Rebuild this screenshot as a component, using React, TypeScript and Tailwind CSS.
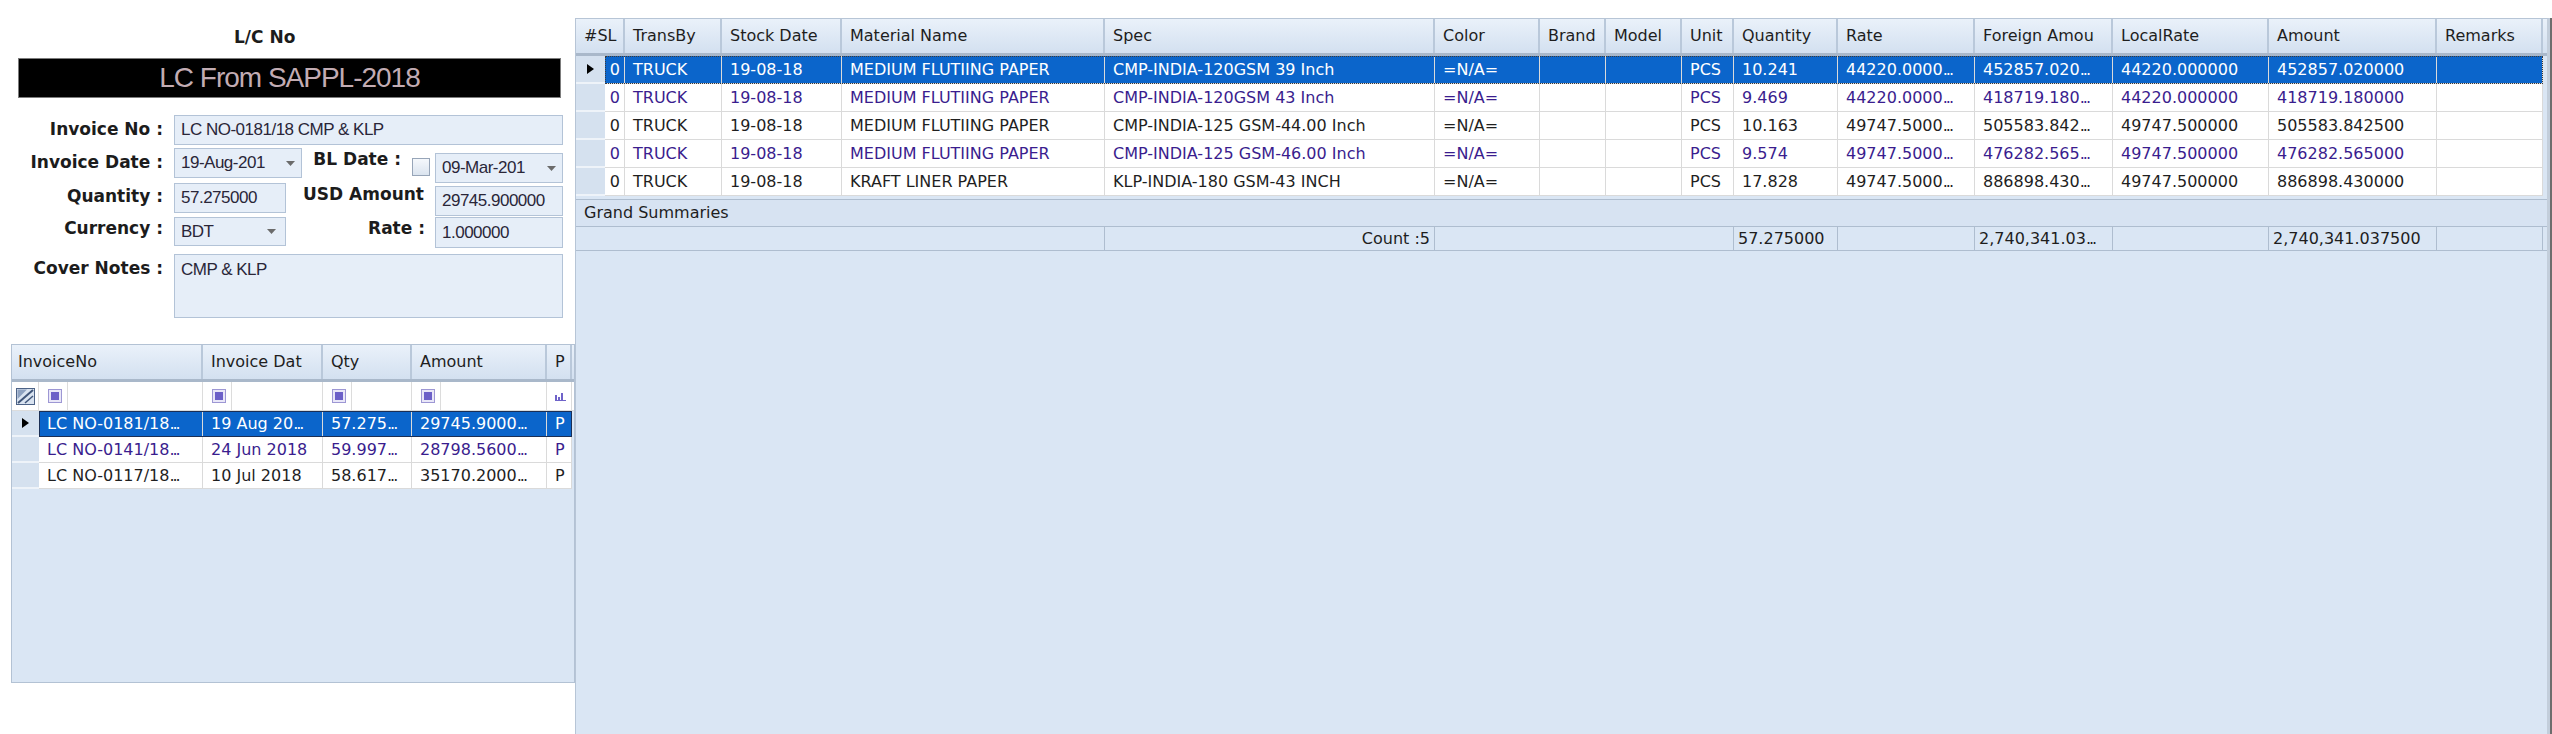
import React from "react";

const GRID_FONT = "font-['DejaVu_Sans',Verdana,sans-serif]";
const INPUT_FONT = "font-['Liberation_Sans',Arial,sans-serif]";

const mainCols = [
  { title: "TransBy", w: "w-[97px]" },
  { title: "Stock Date", w: "w-[120px]" },
  { title: "Material Name", w: "w-[263px]" },
  { title: "Spec", w: "w-[330px]" },
  { title: "Color", w: "w-[105px]" },
  { title: "Brand", w: "w-[66px]" },
  { title: "Model", w: "w-[76px]" },
  { title: "Unit", w: "w-[52px]" },
  { title: "Quantity", w: "w-[104px]" },
  { title: "Rate", w: "w-[137px]" },
  { title: "Foreign Amou", w: "w-[138px]" },
  { title: "LocalRate", w: "w-[156px]" },
  { title: "Amount", w: "w-[168px]" },
  { title: "Remarks", w: "w-[106px]" },
];

const mainRows = [
  ["0", "TRUCK", "19-08-18", "MEDIUM FLUTIING PAPER", "CMP-INDIA-120GSM 39 Inch", "=N/A=", "", "", "PCS", "10.241", "44220.0000…", "452857.020…", "44220.000000", "452857.020000", ""],
  ["0", "TRUCK", "19-08-18", "MEDIUM FLUTIING PAPER", "CMP-INDIA-120GSM 43 Inch", "=N/A=", "", "", "PCS", "9.469", "44220.0000…", "418719.180…", "44220.000000", "418719.180000", ""],
  ["0", "TRUCK", "19-08-18", "MEDIUM FLUTIING PAPER", "CMP-INDIA-125 GSM-44.00 Inch", "=N/A=", "", "", "PCS", "10.163", "49747.5000…", "505583.842…", "49747.500000", "505583.842500", ""],
  ["0", "TRUCK", "19-08-18", "MEDIUM FLUTIING PAPER", "CMP-INDIA-125 GSM-46.00 Inch", "=N/A=", "", "", "PCS", "9.574", "49747.5000…", "476282.565…", "49747.500000", "476282.565000", ""],
  ["0", "TRUCK", "19-08-18", "KRAFT LINER PAPER", "KLP-INDIA-180 GSM-43 INCH", "=N/A=", "", "", "PCS", "17.828", "49747.5000…", "886898.430…", "49747.500000", "886898.430000", ""],
];

const summaryCells = [
  { w: "w-[529px]", t: "", right: false },
  { w: "w-[330px]", t: "Count :5", right: true },
  { w: "w-[299px]", t: "", right: false },
  { w: "w-[104px]", t: "57.275000", right: false },
  { w: "w-[137px]", t: "", right: false },
  { w: "w-[138px]", t: "2,740,341.03…", right: false },
  { w: "w-[156px]", t: "", right: false },
  { w: "w-[168px]", t: "2,740,341.037500", right: false },
  { w: "w-[106px]", t: "", right: false },
];

const invCols = [
  { w: "w-[164px]" },
  { w: "w-[120px]" },
  { w: "w-[89px]" },
  { w: "w-[135px]" },
  { w: "w-[25px]" },
];

const invRows = [
  ["LC NO-0181/18…", "19 Aug 20…", "57.275…", "29745.9000…", "P"],
  ["LC NO-0141/18…", "24 Jun 2018", "59.997…", "28798.5600…", "P"],
  ["LC NO-0117/18…", "10 Jul 2018", "58.617…", "35170.2000…", "P"],
];

// cell text, with the grid's tight "..." for clipped values
function Val({ s }: { s: string }) {
  if (!s.endsWith("…")) return <>{s}</>;
  return (
    <>
      {s.slice(0, -1)}
      <span className="tracking-[-2px]">...</span>
    </>
  );
}

function RowArrow() {
  return (
    <svg width="7" height="10" viewBox="0 0 7 10">
      <path d="M0 0 L7 5 L0 10 Z" fill="#000" />
    </svg>
  );
}

function DropArrow() {
  return (
    <svg width="9" height="5" viewBox="0 0 9 5" className="shrink-0">
      <path d="M0 0 H9 L4.5 5 Z" fill="#6b6b6b" />
    </svg>
  );
}

function FilterIcon() {
  return (
    <svg width="14" height="14" viewBox="0 0 14 14">
      <rect x="0.5" y="0.5" width="13" height="13" fill="#e9e7f8" stroke="#9d97d4" />
      <rect x="3" y="3" width="8" height="8" fill="#6c60c8" />
    </svg>
  );
}

function ClearFilterIcon() {
  return (
    <svg width="19" height="17" viewBox="0 0 19 17">
      <rect x="0.5" y="0.5" width="18" height="16" fill="#d9e3f0" stroke="#4d6387" />
      <path d="M1.5 1.5 H11 L1.5 11 Z" fill="#8ea2c0" />
      <path d="M2 15 L17 2" stroke="#3f5579" strokeWidth="2" />
      <path d="M9 15 L17 8" stroke="#3f5579" strokeWidth="1.5" />
    </svg>
  );
}

function BarsIcon() {
  return (
    <svg width="11" height="9" viewBox="0 0 11 9">
      <rect x="0" y="3" width="2" height="6" fill="#6f63c9" />
      <rect x="3" y="5" width="2" height="4" fill="#6f63c9" />
      <rect x="6" y="1" width="2" height="8" fill="#6f63c9" />
      <rect x="0" y="8" width="11" height="1" fill="#6f63c9" />
    </svg>
  );
}

function Label({ cls, children }: { cls: string; children: React.ReactNode }) {
  return (
    <div
      className={`${cls} shrink-0 flex items-center justify-end whitespace-nowrap ${GRID_FONT} font-bold text-[17px] text-[#1c1c1c]`}
    >
      {children}
    </div>
  );
}

function Field({ cls, text, arrow }: { cls: string; text: string; arrow?: boolean }) {
  return (
    <div
      className={`${cls} shrink-0 flex items-center bg-[#e6eef8] border border-[#b3c3d7] pl-[6px] pr-[6px] ${INPUT_FONT} text-[17px] tracking-[-0.5px] text-[#2a2638]`}
    >
      <span className="flex-1 whitespace-nowrap overflow-hidden">{text}</span>
      {arrow && <DropArrow />}
    </div>
  );
}

function InvoiceForm() {
  return (
    <div className="flex flex-col">
      <div className={`mt-[27px] ml-[234px] h-[20px] leading-[20px] ${GRID_FONT} font-bold text-[17px] text-[#1c1c1c]`}>
        L/C No
      </div>
      <div
        className={`mt-[11px] ml-[18px] w-[543px] h-[40px] bg-black border border-[#7c7c7c] flex items-center justify-center ${INPUT_FONT} text-[28px] tracking-[-1px] text-[#c2acb3]`}
      >
        LC From SAPPL-2018
      </div>

      <div className="mt-[17px] flex h-[30px]">
        <Label cls="w-[163px] h-[30px]">Invoice No :</Label>
        <Field cls="ml-[11px] w-[389px] h-[30px]" text="LC NO-0181/18 CMP & KLP" />
      </div>

      <div className="mt-[3px] flex items-start h-[35px]">
        <Label cls="w-[163px] h-[30px]">Invoice Date :</Label>
        <Field cls="ml-[11px] w-[128px] h-[30px]" text="19-Aug-201" arrow />
        <Label cls="w-[99px] h-[24px]">BL Date :</Label>
        <div className="ml-[11px] mt-[10px] w-[18px] h-[18px] shrink-0 border border-[#97a5b8] bg-linear-to-b from-[#f5f8fc] to-[#dbe4ef]" />
        <Field cls="ml-[5px] mt-[5px] w-[128px] h-[30px]" text="09-Mar-201" arrow />
      </div>

      <div className="flex items-start h-[33px]">
        <Label cls="w-[163px] h-[27px]">Quantity :</Label>
        <Field cls="ml-[11px] w-[112px] h-[30px]" text="57.275000" />
        <Label cls="w-[138px] h-[24px]">USD Amount</Label>
        <Field cls="ml-[11px] mt-[3px] w-[128px] h-[30px]" text="29745.900000" />
      </div>

      <div className="mt-[1px] flex items-start h-[31px]">
        <Label cls="w-[163px] h-[23px]">Currency :</Label>
        <div className="ml-[11px] w-[112px] h-[29px] shrink-0 flex items-center bg-[#e6eef8] border border-[#b3c3d7] pl-[6px] pr-[9px]">
          <span className={`flex-1 ${INPUT_FONT} text-[17px] tracking-[-0.5px] text-[#2a2638]`}>BDT</span>
          <DropArrow />
        </div>
        <Label cls="w-[139px] h-[24px]">Rate :</Label>
        <Field cls="ml-[10px] w-[128px] h-[31px]" text="1.000000" />
      </div>

      <div className="mt-[6px] flex items-start h-[64px]">
        <Label cls="w-[163px] h-[30px]">Cover Notes :</Label>
        <div
          className={`ml-[11px] w-[389px] h-[64px] shrink-0 bg-[#e6eef8] border border-[#b3c3d7] pl-[6px] pt-[2px] ${INPUT_FONT} text-[17px] tracking-[-0.5px] text-[#2a2638]`}
        >
          CMP & KLP
        </div>
      </div>
    </div>
  );
}

function InvoiceGrid() {
  return (
    <div
      className={`mt-[26px] ml-[11px] w-[564px] h-[339px] border border-[#b3c2d4] bg-[#dae6f4] flex flex-col ${GRID_FONT} text-[16px]`}
    >
      <div className="flex h-[37px] shrink-0 border-b-[3px] border-[#a9b8ca] bg-linear-to-b from-[#eaf1fa] to-[#d3e0f0] text-[#1e1e1e]">
        {["InvoiceNo", "Invoice Dat", "Qty", "Amount", "P"].map((t, i) => (
          <div
            key={t}
            className={`${i === 0 ? "w-[191px] pl-[6px]" : invCols[i].w + " pl-[8px]"} shrink-0 flex items-center whitespace-nowrap overflow-hidden border-r-2 border-[#b9c8da]`}
          >
            {t}
          </div>
        ))}
      </div>

      <div className="flex h-[29px] shrink-0 bg-white border-b border-[#dcdcdc]">
        <div className="w-[27px] shrink-0 flex items-center justify-center border-r border-[#dcdcdc]">
          <ClearFilterIcon />
        </div>
        {invCols.map((c, i) => (
          <div key={i} className={`${c.w} shrink-0 flex items-center border-r border-[#dcdcdc]`}>
            {i < 4 ? (
              <div className="h-full flex items-center pl-[9px] pr-[5px] border-r border-[#dcdcdc]">
                <FilterIcon />
              </div>
            ) : (
              <div className="pl-[8px]">
                <BarsIcon />
              </div>
            )}
          </div>
        ))}
      </div>

      {invRows.map((r, i) => {
        const sel = i === 0;
        const tone = sel ? "bg-[#0b65cb] text-white" : i % 2 === 1 ? "bg-white text-[#3a1d8e]" : "bg-white text-[#1f1f1f]";
        return (
          <div key={i} className="flex h-[26px] shrink-0">
            <div className="w-[27px] shrink-0 bg-[#d5e1ef] border-b-2 border-[#eef3f9] flex items-center justify-center">
              {sel && <RowArrow />}
            </div>
            <div className={`flex ${tone} ${sel ? "outline outline-1 outline-[#1b2f55] -outline-offset-1" : ""}`}>
              {invCols.map((c, j) => (
                <div
                  key={j}
                  className={`${c.w} shrink-0 pl-[8px] leading-[26px] whitespace-nowrap overflow-hidden border-r border-b border-[#dadada]`}
                >
                  <Val s={r[j]} />
                </div>
              ))}
            </div>
          </div>
        );
      })}
    </div>
  );
}

function StockGrid() {
  return (
    <div className="w-[1975px] shrink-0 flex flex-col bg-[#dae6f4] border-l border-t border-[#b7c5d6] border-r-[3px] border-r-[#c3cedb]">
      <div className={`flex h-[37px] shrink-0 border-b-[3px] border-[#a9b8ca] bg-linear-to-b from-[#eaf1fa] to-[#d3e0f0] ${GRID_FONT} text-[16px] text-[#1e1e1e]`}>
        <div className="w-[49px] shrink-0 pl-[8px] flex items-center border-r-2 border-[#b9c8da]">#SL</div>
        {mainCols.map((c) => (
          <div
            key={c.title}
            className={`${c.w} shrink-0 pl-[8px] flex items-center whitespace-nowrap overflow-hidden border-r-2 border-[#b9c8da]`}
          >
            {c.title}
          </div>
        ))}
      </div>

      {mainRows.map((r, i) => {
        const sel = i === 0;
        const tone = sel ? "bg-[#0b65cb] text-white" : i % 2 === 1 ? "bg-white text-[#3a1d8e]" : "bg-white text-[#1f1f1f]";
        return (
          <div key={i} className={`flex h-[28px] shrink-0 ${GRID_FONT} text-[16px]`}>
            <div className="w-[29px] shrink-0 bg-[#d5e1ef] border-b-2 border-[#eef3f9] flex items-center justify-center">
              {sel && <RowArrow />}
            </div>
            <div className={`flex ${tone} ${sel ? "outline outline-1 outline-dotted outline-[#3a3a3a] -outline-offset-1" : ""}`}>
              <div className="w-[20px] shrink-0 pr-[4px] text-right leading-[28px] border-r border-b border-[#dadada]">{r[0]}</div>
              {mainCols.map((c, j) => (
                <div
                  key={j}
                  className={`${c.w} shrink-0 pl-[8px] leading-[28px] whitespace-nowrap overflow-hidden border-r border-b border-[#dadada]`}
                >
                  <Val s={r[j + 1]} />
                </div>
              ))}
            </div>
          </div>
        );
      })}

      <div className={`mt-[3px] h-[28px] shrink-0 pl-[8px] flex items-center border-y border-[#aebdcf] bg-[#d7e3f2] ${GRID_FONT} text-[16px] text-[#1e1e1e]`}>
        Grand Summaries
      </div>
      <div className={`flex h-[24px] shrink-0 border-b border-[#aebdcf] ${GRID_FONT} text-[16px] text-[#1e1e1e]`}>
        {summaryCells.map((c, i) => (
          <div
            key={i}
            className={`${c.w} shrink-0 px-[4px] leading-[23px] whitespace-nowrap overflow-hidden border-r border-[#aebdcf] ${c.right ? "text-right" : "text-left"}`}
          >
            <Val s={c.t} />
          </div>
        ))}
      </div>
    </div>
  );
}

export default function App() {
  return (
    <div className="flex w-[2552px] h-[734px] bg-white overflow-hidden">
      <div className="w-[575px] shrink-0 flex flex-col">
        <InvoiceForm />
        <InvoiceGrid />
      </div>
      <div className="flex-1 flex pt-[18px]">
        <StockGrid />
        <div className="w-[2px] shrink-0 bg-[#6d6d6d]" />
      </div>
    </div>
  );
}
